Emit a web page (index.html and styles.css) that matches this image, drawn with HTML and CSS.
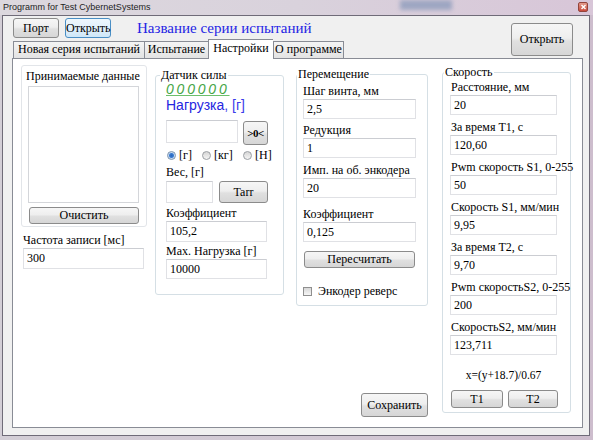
FILE: index.html
```
<!DOCTYPE html>
<html lang="ru">
<head>
<meta charset="utf-8">
<title>Programm for Test CybernetSystems</title>
<link rel="stylesheet" href="styles.css">
</head>
<body>
<div class="window">
	<div class="titlebar">
		<span class="caption">Programm for Test CybernetSystems</span>
		<span class="glow"></span>
		<span class="close"><svg width="7" height="6" viewBox="0 0 7 6"><path d="M1.5 1L5.5 5M5.5 1L1.5 5" stroke="#fff" stroke-width="1.4"/></svg></span>
	</div>

	<div class="client">
		<div class="head">
			<div class="head-main">
				<div class="toolbar">
					<button class="btn btn-port">Порт</button>
					<button class="btn btn-open focus">Открыть</button>
					<span class="series">Название серии испытаний</span>
				</div>
				<div class="tabs">
					<div class="tab tab-new">Новая серия испытаний</div>
					<div class="tab tab-test">Испытание</div>
					<div class="tab tab-set active">Настройки</div>
					<div class="tab tab-about">О программе</div>
				</div>
			</div>
			<button class="btn btn-big">Открыть</button>
		</div>

		<div class="page">

			<!-- received data -->
			<div class="col col-data">
				<div class="panel">
					<div class="panel-title">Принимаемые данные</div>
					<div class="listbox"></div>
					<button class="btn btn-clear">Очистить</button>
				</div>
				<div class="lbl lbl-rate">Частота записи [мс]</div>
				<input class="tb tb-rate" value="300">
			</div>

			<!-- force sensor -->
			<div class="col col-sensor">
				<fieldset class="gb">
					<legend class="lg-sensor">Датчик силы</legend>
					<div class="gb-body body-sensor">
						<div class="zero">000000</div>
						<div class="load">Нагрузка<span class="unit">, [г]</span></div>
						<div class="row row-load">
							<input class="tb tb-load">
							<button class="btn btn-zero">&gt;0&lt;</button>
						</div>
						<div class="radios">
							<span class="opt opt-g"><span class="radio on"></span>[г]</span>
							<span class="opt opt-kg"><span class="radio"></span>[кг]</span>
							<span class="opt"><span class="radio"></span>[Н]</span>
						</div>
						<div class="lbl lbl-weight">Вес, [г]</div>
						<div class="row row-tare">
							<input class="tb tb-weight">
							<button class="btn btn-tare">Tarr</button>
						</div>
						<div class="lbl lbl-k">Коэффициент</div>
						<input class="tb tb-k" value="105,2">
						<div class="lbl lbl-max">Max. Нагрузка [г]</div>
						<input class="tb tb-max" value="10000">
					</div>
				</fieldset>
			</div>

			<!-- movement -->
			<div class="col col-move">
				<fieldset class="gb">
					<legend class="lg-move">Перемещение</legend>
					<div class="gb-body body-move">
						<div class="lbl m1">Шаг винта, мм</div>
						<input class="tb" value="2,5">
						<div class="lbl m2">Редукция</div>
						<input class="tb" value="1">
						<div class="lbl m3">Имп. на об. энкодера</div>
						<input class="tb" value="20">
						<div class="lbl m4">Коэффициент</div>
						<input class="tb" value="0,125">
						<button class="btn btn-recalc">Пересчитать</button>
						<div class="checkrow"><span class="check"></span>Энкодер реверс</div>
					</div>
				</fieldset>
				<button class="btn btn-save">Сохранить</button>
			</div>

			<!-- speed -->
			<div class="col col-speed">
				<fieldset class="gb">
					<legend class="lg-speed">Скорость</legend>
					<div class="gb-body body-speed">
						<div class="lbl">Расстояние, мм</div>
						<input class="tb" value="20">
						<div class="lbl">За время T1, с</div>
						<input class="tb" value="120,60">
						<div class="lbl">Pwm скорость S1, 0-255</div>
						<input class="tb" value="50">
						<div class="lbl">Скорость S1, мм/мин</div>
						<input class="tb" value="9,95">
						<div class="lbl">За время T2, с</div>
						<input class="tb" value="9,70">
						<div class="lbl">Pwm скоростьS2, 0-255</div>
						<input class="tb" value="200">
						<div class="lbl">СкоростьS2, мм/мин</div>
						<input class="tb" value="123,711">
						<div class="formula">x=(y+18.7)/0.67</div>
						<div class="row row-t">
							<button class="btn btn-t1">T1</button>
							<button class="btn btn-t2">T2</button>
						</div>
					</div>
				</fieldset>
			</div>

		</div><!-- /page -->
	</div><!-- /client -->
</div><!-- /window -->
</body>
</html>
```

FILE: styles.css
```
*, *:after, *:before { box-sizing: border-box; }

body {
	margin: 0;
	width: 593px;
	height: 440px;
	overflow: hidden;
	background: #cfc9d2;
	font-family: "Liberation Serif", "Times New Roman", serif;
	font-size: 12px;
	color: #000;
}

.window {
	width: 593px;
	height: 440px;
	padding: 0 3px 4px 2px;
	background: linear-gradient(90deg, #d3ced6 0%, #d2c8d4 60%, #cdbdcd 100%);
}

/*************************************
Title bar
**************************************/

.titlebar {
	display: flex;
	align-items: flex-start;
	height: 15px;
	margin: 0 -3px 0 -2px;
	background: linear-gradient(90deg, #dcd8de 0%, #d9d2dc 50%, #d8c6d8 100%);
}

.caption {
	width: 400px;
	padding: 2px 0 0 3px;
	font: 9px/11px "Liberation Sans", Arial, sans-serif;
	color: #1e1e1e;
}

.glow {
	width: 52px;
	height: 10px;
	background: #8f9dbc;
	filter: blur(2px);
	opacity: .8;
}

.close {
	display: flex;
	align-items: center;
	justify-content: center;
	width: 10px;
	height: 10px;
	margin: 2px 5px 0 auto;
	border: 1px solid #93443c;
	border-radius: 2px;
	background: linear-gradient(#e39a8c, #c9493a);
}

/*************************************
Client area and header
**************************************/

.client {
	display: flex;
	flex-direction: column;
	height: 421px;
	padding: 0 6px 7px 9px;
	border: 1px solid #6f6b78;
	background: #f0f0f0;
}

.head {
	display: flex;
	height: 42px;
}

.head-main {
	flex: 1;
	padding-top: 2px;
}

.toolbar {
	display: flex;
	align-items: center;
	height: 20px;
	padding-left: 1px;
}

.btn {
	display: block;
	margin: 0;
	padding: 0;
	font: 12px "Liberation Serif", "Times New Roman", serif;
	color: #000;
	border: 1px solid #8b8b8b;
	border-radius: 3px;
	background: linear-gradient(#f6f6f6 0%, #eeeeee 45%, #e0e0e0 55%, #d6d6d6 100%);
	white-space: nowrap;
}

.btn-port,
.btn-open {
	width: 46px;
	height: 20px;
}

.btn-open {
	margin-left: 6px;
}

.btn.focus {
	border-color: #4a8ec4;
	background: linear-gradient(#eef7fd 0%, #e1f0fb 50%, #cfe7f8 100%);
}

.series {
	margin-left: 26px;
	font-size: 15px;
	color: #2424e4;
}

.btn-big {
	width: 62px;
	height: 33px;
	margin: 7px 10px 0 0;
}

/*************************************
Tabs
**************************************/

.tabs {
	display: flex;
	align-items: flex-end;
	height: 19px;
	margin-top: 1px;
	padding-left: 1px;
}

.tab {
	height: 17px;
	line-height: 15px;
	text-align: center;
	white-space: nowrap;
	border: 1px solid #898c95;
	border-bottom: none;
	border-right: none;
	background: linear-gradient(#f4f4f4, #e3e3e3);
}

.tab-new { width: 131px; }
.tab-test { width: 64px; }
.tab-set { width: 65px; }
.tab-about { width: 71px; border-right: 1px solid #898c95; }

.tab.active {
	position: relative;
	z-index: 1;
	height: 20px;
	margin-bottom: -1px;
	line-height: 16px;
	background: #fff;
}

/*************************************
Tab page
**************************************/

.page {
	display: flex;
	align-items: flex-start;
	flex: 1;
	border: 1px solid #898c95;
	background: #fff;
}

.col-data {
	width: 126px;
	margin: 6px 0 0 8px;
}

.col-sensor {
	width: 129px;
	margin: 9px 0 0 8px;
}

.col-move {
	display: flex;
	flex-direction: column;
	width: 132px;
	margin: 8px 0 0 12px;
}

.col-speed {
	width: 129px;
	margin: 6px 0 0 14px;
}

.lbl {
	line-height: 16px;
	white-space: nowrap;
}

.tb {
	display: block;
	width: 100%;
	height: 20px;
	margin: 0;
	padding: 0 0 0 3px;
	font: 12px "Liberation Serif", "Times New Roman", serif;
	color: #000;
	border: 1px solid #e0e1e5;
	border-top-color: #cbcdd2;
	background: #fff;
	outline: none;
}

.row {
	display: flex;
	align-items: flex-start;
}

/* received data */

.panel {
	padding: 2px 0 2px 6px;
	border: 1px solid #e2e5e9;
	border-radius: 3px;
}

.panel-title {
	line-height: 16px;
	margin-left: -2px;
	white-space: nowrap;
}

.listbox {
	width: 111px;
	height: 117px;
	margin-top: 2px;
	border: 1px solid #d4d6da;
	background: #fff;
}

.btn-clear {
	width: 110px;
	height: 17px;
	margin: 4px 0 0 1px;
}

.lbl-rate {
	margin-top: 5px;
	padding-left: 2px;
}

.tb-rate {
	width: 121px;
	height: 21px;
	margin-left: 2px;
}

/* group boxes */

.gb {
	margin: 0;
	padding: 0;
	min-width: 0;
	border: 1px solid #d5dfe5;
	border-radius: 3px;
}

.gb legend {
	padding: 0 1px;
	line-height: 14px;
	white-space: nowrap;
}

.gb legend.lg-sensor { margin-left: 4px; }
.gb legend.lg-move { margin-left: 0; }
.gb legend.lg-speed { margin-left: 1px; }

/* force sensor */

.body-sensor {
	padding: 0 0 15px 10px;
}

.zero {
	font: italic 14px/14px "Liberation Sans", Arial, sans-serif;
	letter-spacing: 2.8px;
	color: #45a545;
	text-decoration: underline;
	text-decoration-color: #6cbf6c;
}

.load {
	margin-top: 1px;
	font: 14px/16px "Liberation Sans", Arial, sans-serif;
	color: #2525e0;
}

.load .unit {
	color: #3b3bea;
}

.row-load {
	margin-top: 7px;
}

.tb-load {
	width: 72px;
	height: 23px;
}

.btn-zero {
	width: 25px;
	height: 24px;
	margin: 1px 0 0 5px;
	font-weight: bold;
	font-size: 11px;
	letter-spacing: -0.5px;
}

.radios {
	display: flex;
	align-items: center;
	height: 16px;
	margin: 2px 0 0 1px;
}

.opt {
	display: flex;
	align-items: center;
	white-space: nowrap;
}

.opt-g { width: 35px; }
.opt-kg { width: 41px; }

.radio {
	width: 9px;
	height: 9px;
	margin-right: 3px;
	border: 1px solid #9a9ea3;
	border-radius: 50%;
	background: linear-gradient(#d6d6d6, #f4f4f4);
}

.radio.on {
	border-color: #7d93ad;
	background: radial-gradient(circle, #2b68bd 0, #3b7bd0 2px, #c5daf1 3px, #e9f1fa 100%);
}

.lbl-weight { margin-top: 1px; }

.row-tare {
	margin-top: 1px;
}

.tb-weight {
	width: 47px;
	height: 22px;
}

.btn-tare {
	width: 49px;
	height: 22px;
	margin-left: 6px;
}

.lbl-k { margin-top: 2px; }

.tb-k {
	width: 101px;
	height: 21px;
}

.lbl-max { margin-top: 1px; }

.tb-max {
	width: 101px;
}

/* movement */

.body-move {
	padding: 0 0 7px 6px;
}

.body-move .tb {
	width: 113px;
}

.m1 { margin-top: 2px; }
.m2 { margin-top: 3px; }
.m3 { margin-top: 4px; }
.m4 { margin-top: 8px; }

.btn-recalc {
	width: 111px;
	height: 17px;
	margin: 9px 0 0 1px;
}

.checkrow {
	display: flex;
	align-items: center;
	height: 14px;
	margin-top: 16px;
	white-space: nowrap;
}

.check {
	width: 9px;
	height: 9px;
	margin-right: 6px;
	border: 1px solid #8f8f8f;
	background: linear-gradient(#d8d8d8, #f6f6f6);
}

.btn-save {
	align-self: flex-end;
	width: 67px;
	height: 24px;
	margin-top: 87px;
}

/* speed */

.body-speed {
	padding: 0 0 4px 7px;
}

.body-speed .tb {
	width: 107px;
}

.body-speed .lbl {
	padding-left: 1px;
}

.body-speed .tb + .lbl {
	margin-top: 4px;
}

.formula {
	width: 107px;
	margin-top: 12px;
	line-height: 16px;
	text-align: center;
	font-size: 11.5px;
}

.row-t {
	margin-top: 7px;
	padding-left: 1px;
}

.btn-t1 {
	width: 52px;
	height: 18px;
}

.btn-t2 {
	width: 50px;
	height: 18px;
	margin-left: 5px;
}
```
